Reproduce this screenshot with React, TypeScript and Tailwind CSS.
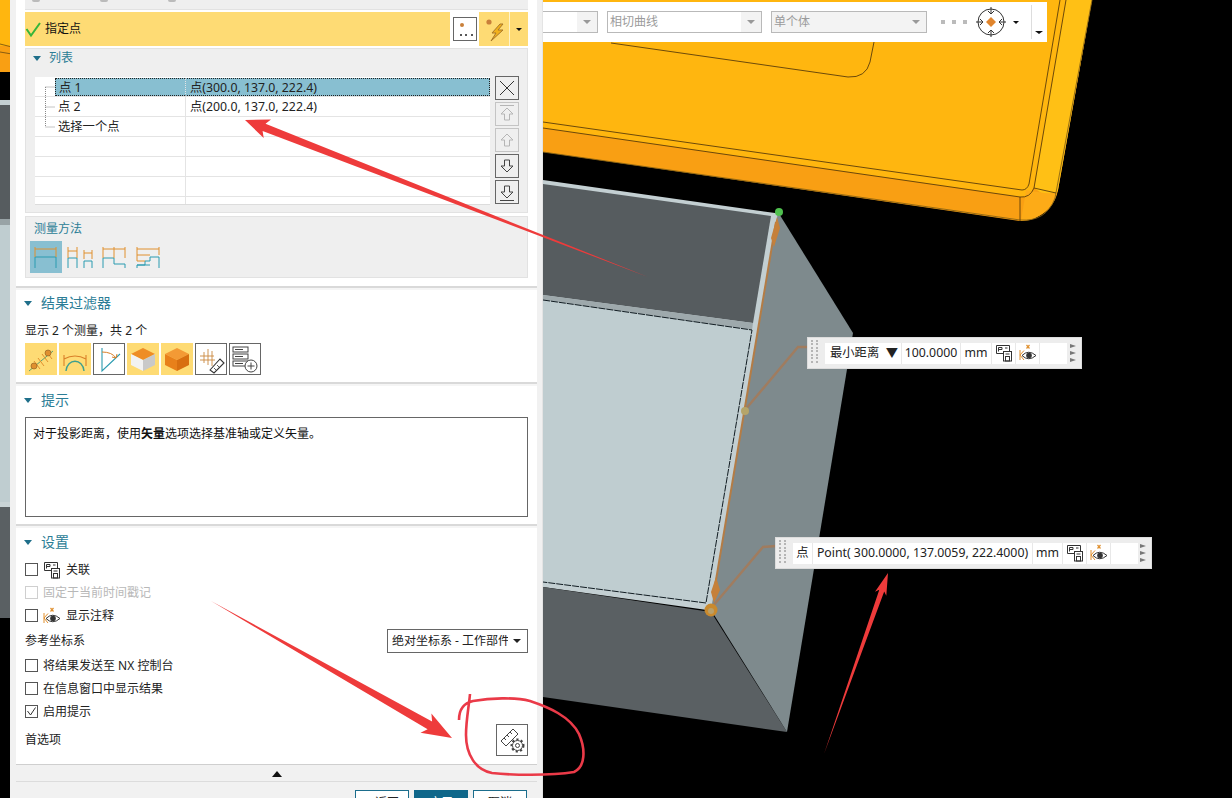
import React from "react";

const RED = "#ee3b3b";
const OR = "#e0902f";
const TE = "#2a9bb0";

function arrow(tx: number, ty: number, bx: number, by: number, hl: number, hw: number, sw: number) {
  const L = Math.hypot(bx - tx, by - ty);
  const dx = (bx - tx) / L, dy = (by - ty) / L;
  const px = -dy, py = dx;
  const p = (a: number, b: number) => `${(tx + dx * a + px * b).toFixed(1)},${(ty + dy * a + py * b).toFixed(1)}`;
  return [p(0, 0), p(hl, hw), p(hl * 0.85, sw), `${bx},${by}`, p(hl * 0.85, -sw), p(hl, -hw)].join(" ");
}

function Canvas() {
  return (
    <svg className="absolute inset-0" width="1232" height="798" viewBox="0 0 1232 798">
      <rect width="1232" height="798" fill="#000" />
      {/* left strip */}
      <rect x="0" y="0" width="12" height="46" fill="#ffb60f" />
      <rect x="0" y="46" width="12" height="26" fill="#f99f13" />
      <path d="M0 44 L12 47 M0 52 L12 54" stroke="#6b4a10" strokeWidth="0.8" />
      <rect x="0" y="100" width="12" height="6" fill="#c3cfd2" />
      <rect x="0" y="105" width="12" height="114" fill="#565c5f" />
      <rect x="0" y="219" width="12" height="6" fill="#98a3a6" />
      <rect x="0" y="225" width="12" height="277" fill="#bfcdd0" />
      <rect x="0" y="502" width="12" height="6" fill="#c9d4d6" />
      <rect x="0" y="507" width="12" height="111" fill="#5a6063" />
      {/* yellow plate */}
      <path d="M543 0 L1092 0 L1058 190 Q1054 212 1030 220 L1020 221 L543 152 Z" fill="#f99f13" />
      <path d="M543 0 L1066 0 L1034 186 Q1032 196 1022 197 L543 128 Z" fill="#ffb60f" />
      <path d="M1066 0 L1092 0 L1058 190 Q1054 205 1042 214 Q1052 200 1040 192 L1034 188 Z" fill="#ffc015" />
      <path d="M1026 190 Q1050 195 1057 192 Q1052 212 1030 220 L1021 221 Z" fill="#fdab17" />
      <g fill="none" stroke="#5b3d0a" strokeWidth="0.9">
        <path d="M543 122 L1022 190 Q1027 190 1029 184 L1060 0" />
        <path d="M543 128 L1020 197 Q1030 198 1034 188 L1066 0" />
        <path d="M543 152 L1020 220 Q1046 222 1055 198 L1092 0" stroke="#8a6414" />
        <path d="M1020 197 L1020 221 M1034 188 L1056 193" />
        <path d="M611 43 L848 77 Q866 78 870 62 L874 42" />
      </g>
      {/* box */}
      <polygon points="543,180 775,213 779,213 712,610 707,610 543,587" fill="#c3cfd2" />
      <polygon points="543,184 771,216 753,323 543,295" fill="#565c5f" />
      <polygon points="543,295 753,323 752,330 543,300" fill="#9ea9ac" />
      <polygon points="543,300 752,330 706,603 543,582" fill="#bfcdd0" />
      <polygon points="543,587 711,612 787,732 543,697" fill="#5a6063" />
      <polygon points="778,212 853,333 787,732 711,610" fill="#7e8a8d" />
      <path d="M543 300 L752 330 L706 603 L543 582" fill="none" stroke="#111c22" strokeWidth="1" strokeDasharray="7 1" />
      <path d="M776 222 L714 592" stroke="#b47c45" strokeWidth="2" />
      <path d="M745 410 L798 347 L808 347" fill="none" stroke="#a07c5f" strokeWidth="2.4" />
      <path d="M713 606 L763 547 L776 546" fill="none" stroke="#a07c5f" strokeWidth="2.4" />
      <path d="M777 217 L780 228 L774 247 L771 238 Z" fill="#c5803a" />
      <path d="M716 577 L720 590 L714 603 L711 592 Z" fill="#c5803a" />
      <circle cx="745" cy="411" r="4" fill="#b5a56a" />
      <circle cx="711" cy="610" r="6.5" fill="#c98a2e" />
      <circle cx="711" cy="611" r="3" fill="#b9a06a" />
      <circle cx="779" cy="212" r="4" fill="#4fc04f" />
    </svg>
  );
}

function Annotations() {
  return (
    <svg className="absolute inset-0 pointer-events-none" width="1232" height="798" viewBox="0 0 1232 798">
      <polygon points={arrow(245, 120, 648, 277, 24, 10, 4)} fill={RED} />
      <polygon points={arrow(452, 738, 211, 601, 30, 11, 4.5)} fill={RED} />
      <polygon points={arrow(888, 573, 824, 754, 22, 6, 2.6)} fill={RED} />
      <path
        d="M459 720 C459 709 464 703 473 701 C490 698 515 697 530 701 C548 707 570 716 579 734 C586 750 585 767 574 772 C550 776 510 775 492 773 C476 770 466 755 466 735 C466 720 469 706 470 694"
        fill="none"
        stroke="#ea3a48"
        strokeWidth="2.6"
      />
    </svg>
  );
}

function Caret() {
  return <span className="w-0 h-0 border-l-[4px] border-r-[4px] border-t-[5px] border-l-transparent border-r-transparent border-t-[#1f6f8a]" />;
}

function AssocIcon() {
  return (
    <svg width="18" height="18" viewBox="0 0 18 18" fill="none" stroke="#333" strokeWidth="1">
      <path d="M8 9.5 H1.5 V1.5 H14.5 V7" />
      <path d="M3.5 7.5 V3.5 H7 V5.5 H3.5 M10 4 H12.5" />
      <rect x="8.5" y="7.5" width="8" height="9.5" />
      <rect x="10.5" y="12.5" width="4" height="4.5" />
      <path d="M10.5 10 H14.5" />
    </svg>
  );
}

function EyeIcon() {
  return (
    <svg width="18" height="18" viewBox="0 0 18 18" fill="none">
      <path d="M7.5 1 L10.5 4.5 M10.5 1 L7.5 4.5" stroke={OR} strokeWidth="1.2" />
      <path d="M1 6 V16 M1 11 L5 6.5 M1 11 L5 16" stroke={OR} strokeWidth="1" />
      <path d="M3 11.5 Q9.5 5 17 11.5 Q9.5 18 3 11.5 Z" stroke="#333" strokeWidth="1" fill="#fff" />
      <circle cx="10" cy="11.5" r="2.8" fill="#333" />
    </svg>
  );
}

function Arrow({ d, dim, last, first }: { d: "up" | "down"; dim?: boolean; last?: boolean; first?: boolean }) {
  const c = dim ? "#b5b5b5" : "#444";
  return (
    <span className={`w-[24px] h-[24px] flex items-center justify-center border ${dim ? "border-[#c4c4c4]" : "border-[#666]"}`}>
      <svg width="18" height="20" viewBox="0 0 18 20" fill="none" stroke={c} strokeWidth="1">
        <g transform={d === "down" ? "rotate(180 9 10)" : undefined}>
          <path d="M9 4 L3 10 H6.5 V16 H11.5 V10 H15 Z" />
          {(first || last) && <path d="M2 1.5 H16" />}
        </g>
      </svg>
    </span>
  );
}

function MethodIcon({ n }: { n: number }) {
  const paths: Record<number, [string, string]> = {
    1: ["M5 6 V16 M26 6 V16 M5 8 H26", "M5 16 H26 M5 16 V27 M26 16 V27"],
    2: ["M4 6 V17 M13 6 V17 M4 10 H13 M20 9 V18 M28 9 V18 M20 12 H28", "M4 17 H13 M4 17 V27 M13 17 V27 M20 20 H28 M20 20 V27 M28 20 V27"],
    3: ["M5 6 V17 M16 6 V17 M27 6 V17 M5 8 H27", "M5 27 V17 H16 V23 H27 V27"],
    4: ["M5 6 V20 M5 8 H27 M27 6 V14 M5 20 H13 M5 14 H18", "M5 27 V24 H13 V20 H18 V16 H27 V27 M5 24 H18"],
  };
  const [o, t] = paths[n];
  return (
    <span className={`w-[32px] h-[32px] flex items-center justify-center ${n === 1 ? "bg-[#88bfd1]" : ""}`}>
      <svg width="32" height="32" viewBox="0 0 32 32" fill="none" strokeWidth="1">
        <path d={t} stroke={TE} />
        <path d={o} stroke={OR} />
      </svg>
    </span>
  );
}

function Cube({ white }: { white?: boolean }) {
  return (
    <svg width="32" height="32" viewBox="0 0 32 32">
      <polygon points="16,5 28,11 16,17 4,11" fill={white ? "#ee8d25" : "#f39a35"} />
      <polygon points="4,11 16,17 16,28 4,22" fill={white ? "#f2f2f2" : "#e8801a"} />
      <polygon points="16,17 28,11 28,22 16,28" fill={white ? "#c9c9c9" : "#d86f10"} />
    </svg>
  );
}

function FilterIcons() {
  const yellow = "w-[32px] h-[32px] bg-[#fedb74] flex items-center justify-center";
  const box = "w-[32px] h-[32px] bg-white border border-[#666] flex items-center justify-center";
  return (
    <div className="flex gap-[2px] h-[32px]">
      <span className={yellow}>
        <svg width="32" height="32" viewBox="0 0 32 32" fill="none">
          <path d="M4 28 L28 8" stroke="#5f9f6f" strokeWidth="1" />
          <path d="M9 18 L15 26 M13 15 L19 23 M17 11 L23 19 M21 8 L27 16" stroke={OR} strokeWidth="1" />
          <circle cx="9" cy="23" r="3" fill={OR} stroke="#8a5a20" strokeWidth="0.6" />
          <circle cx="23" cy="10" r="3" fill={OR} stroke="#8a5a20" strokeWidth="0.6" />
        </svg>
      </span>
      <span className={yellow}>
        <svg width="32" height="32" viewBox="0 0 32 32" fill="none">
          <path d="M7 28 C8 15 24 15 25 28" stroke="#3f9f8f" strokeWidth="1.4" />
          <path d="M5 12 V23 M27 12 V23 M5 16 Q16 10 27 16" stroke="#d97f28" strokeWidth="1.1" />
        </svg>
      </span>
      <span className={box}>
        <svg width="30" height="30" viewBox="0 0 30 30" fill="none">
          <path d="M8 4 V27 L26 10" stroke={TE} strokeWidth="1.1" />
          <path d="M8 8 Q18 8 22 14 M18 13 L22 14 L23 10" stroke="#d97f28" strokeWidth="1" />
        </svg>
      </span>
      <span className={yellow}><Cube white /></span>
      <span className={yellow}><Cube /></span>
      <span className={box}>
        <svg width="30" height="30" viewBox="0 0 30 30" fill="none">
          <path d="M4 12 H18 M4 16 H19 M8 8 V19 M12 5 V21 M16 7 V22" stroke="#c9883f" strokeWidth="0.9" />
          <path d="M14 26 L24 15 L28 19 L18 29 Z" stroke="#333" strokeWidth="1.1" fill="#fff" />
          <path d="M18 24 L21 27 M21 21 L24 24" stroke="#333" strokeWidth="0.8" />
        </svg>
      </span>
      <span className={box}>
        <svg width="30" height="30" viewBox="0 0 30 30" fill="none" stroke="#444" strokeWidth="1">
          <rect x="3" y="3" width="15" height="5" />
          <rect x="3" y="10" width="15" height="5" />
          <rect x="3" y="17" width="15" height="5" />
          <path d="M5 5.5 H13 M5 12.5 H13 M5 19.5 H13" />
          <circle cx="21" cy="22" r="6" fill="#fff" />
          <path d="M17.5 22 H24.5 M21 18.5 V25.5" />
        </svg>
      </span>
    </div>
  );
}

function Check({ on, dim }: { on?: boolean; dim?: boolean }) {
  return (
    <span className={`w-[13px] h-[13px] shrink-0 border flex items-center justify-center bg-white ${dim ? "border-[#cfcfcf]" : "border-[#555]"}`}>
      {on && (
        <svg width="11" height="11" viewBox="0 0 11 11" fill="none" stroke="#333" strokeWidth="1">
          <path d="M1.5 5 L4.5 9 L9.5 1.5" />
        </svg>
      )}
    </span>
  );
}

function Row({ on, dim, icon, label }: { on?: boolean; dim?: boolean; icon?: React.ReactNode; label: string }) {
  return (
    <div className="h-[23px] flex items-center gap-[5px]">
      <Check on={on} dim={dim} />
      {icon}
      <span className={dim ? "text-[#b8b8b8]" : "text-[#222]"}>{label}</span>
    </div>
  );
}

function Heading({ text, h }: { text: string; h: string }) {
  return (
    <div className={`${h} flex items-center pl-[8px] gap-[9px]`}>
      <Caret />
      <span className="text-[14px] text-[#2b7d96]">{text}</span>
    </div>
  );
}

function Sep() {
  return (
    <>
      <div className="h-[2px] bg-[#d9d9d9]" />
      <div className="h-[2px] bg-[#f5f5f5]" />
    </>
  );
}

function PointList() {
  const rows = [
    ["点 1", "点(300.0, 137.0, 222.4)"],
    ["点 2", "点(200.0, 137.0, 222.4)"],
    ["选择一个点", ""],
    ["", ""],
    ["", ""],
    ["", ""],
    ["", ""],
  ];
  return (
    <div className="relative w-[455px] h-[128px] bg-white overflow-hidden border-b border-[#dcdcdc] text-[12.3px]">
      {rows.map((r, i) => (
        <div key={i} className={`flex border-b border-[#e4e4e4] ${i === 6 ? "h-[8px]" : "h-[20px]"} ${i === 0 ? "pt-[1px]" : ""}`}>
          <div className="w-[150px] pl-[20px] relative">
            <div className={`h-full flex items-center pl-[3px] pt-[2px] ${i === 0 ? "bg-[#88bfd1] border-y border-l border-dotted border-[#222]" : ""}`}>{r[0]}</div>
          </div>
          <div className={`flex-1 border-l border-[#e4e4e4] pl-[4px] pt-[2px] flex items-center ${i === 0 ? "bg-[#88bfd1] border-y border-r border-y-[#222] border-r-[#222] border-dotted" : ""}`}>{r[1]}</div>
        </div>
      ))}
      <svg className="absolute left-[8px] top-[8px]" width="14" height="44" viewBox="0 0 14 44" fill="none" stroke="#888" strokeWidth="1" strokeDasharray="1 1">
        <path d="M2.5 2 V42 M2.5 2 H12 M2.5 22 H12 M2.5 42 H12" />
      </svg>
    </div>
  );
}

function Panel() {
  return (
    <div className="absolute left-[10px] top-0 w-[533px] h-[798px] bg-[#f1f1f1] pl-[6px] pr-[5px] overflow-hidden border-r border-[#e4e4e4] text-[12px] leading-none text-[#222]">
      <div className="h-[286px] bg-white px-[9px]">
        <div className="h-[10px] bg-[#efefef] relative border-b border-[#e2e2e2] flex">
          <span className="w-[8px] h-[2px] ml-[7px] bg-[#bbb] rounded-b-full" />
          <span className="w-[8px] h-[2px] ml-[60px] bg-[#bbb] rounded-b-full" />
          <span className="w-[8px] h-[2px] ml-[60px] bg-[#bbb] rounded-b-full" />
        </div>
        <div className="mt-[2px] h-[34px] flex">
          <div className="w-[425px] bg-[#fedb74] flex items-center gap-[3px]">
            <svg width="17" height="17" viewBox="0 0 17 17" fill="none" stroke="#35b53a" strokeWidth="2">
              <path d="M1.5 8 L6 14.5 L15 2" />
            </svg>
            <span className="text-[#111]">指定点</span>
          </div>
          <div className="w-[29px] flex items-center justify-center">
            <span className="w-[24px] h-[24px] bg-white border border-[#666] block">
              <svg width="22" height="22" viewBox="0 0 22 22">
                <circle cx="8" cy="7" r="2" fill="#c9803a" />
                <path d="M6 17 h2 M11 17 h2 M17 17 h2" stroke="#222" strokeWidth="1.6" />
              </svg>
            </span>
          </div>
          <div className="w-[31px] bg-[#fedb74] flex items-center justify-center border-r border-[#fff3c8]">
            <svg width="30" height="30" viewBox="0 0 30 30">
              <circle cx="10" cy="8" r="2.6" fill="#c9803a" />
              <path d="M21 10 L13 19 H17 L12 27 L24 16 H19 L24 10 Z" fill="#f2b21c" stroke="#a9772a" strokeWidth="1" />
            </svg>
          </div>
          <div className="flex-1 bg-[#fedb74] flex items-center justify-center">
            <span className="w-0 h-0 border-l-[3px] border-r-[3px] border-t-[3px] border-l-transparent border-r-transparent border-t-[#111]" />
          </div>
        </div>
        <div className="mt-[2px] h-[165px] bg-[#efefef] border border-[#e2e2e2] pl-[9px]">
          <div className="h-[18px] flex items-center -ml-[2px] gap-[8px]">
            <Caret />
            <span className="text-[#2b7d96]">列表</span>
          </div>
          <div className="mt-[10px] flex items-start">
            <PointList />
            <div className="ml-[5px] -mt-[1px] flex flex-col gap-[2px]">
              <span className="w-[24px] h-[24px] flex items-center justify-center border border-[#666]">
                <svg width="18" height="18" viewBox="0 0 18 18" stroke="#333" strokeWidth="1">
                  <path d="M2 2 L16 16 M16 2 L2 16" />
                </svg>
              </span>
              <Arrow d="up" dim first />
              <Arrow d="up" dim />
              <Arrow d="down" />
              <Arrow d="down" last />
            </div>
          </div>
        </div>
        <div className="mt-[3px] h-[62px] bg-[#efefef] border border-[#e2e2e2]">
          <div className="h-[24px] flex items-center pl-[8px] text-[#2b7d96]">测量方法</div>
          <div className="flex gap-[2px] pl-[4px]">
            <MethodIcon n={1} />
            <MethodIcon n={2} />
            <MethodIcon n={3} />
            <MethodIcon n={4} />
          </div>
        </div>
      </div>
      <Sep />

      <div className="h-[92px] bg-white px-[9px]">
        <div className="-ml-[9px]">
          <Heading text="结果过滤器" h="h-[26px]" />
        </div>
        <div className="h-[27px] flex items-center pt-[2px]">显示 2 个测量，共 2 个</div>
        <FilterIcons />
      </div>
      <Sep />

      <div className="h-[138px] bg-white px-[9px]">
        <div className="-ml-[9px]">
          <Heading text="提示" h="h-[28px]" />
        </div>
        <div className="mt-[3px] h-[100px] border border-[#666] px-[7px] pt-[10px] text-[#111]">
          对于投影距离，使用<b>矢量</b>选项选择基准轴或定义矢量。
        </div>
      </div>
      <Sep />

      <div className="h-[236px] bg-white px-[9px]">
        <div className="-ml-[9px]">
          <Heading text="设置" h="h-[30px] pb-[2px]" />
        </div>
        <Row icon={<AssocIcon />} label="关联" />
        <Row dim label="固定于当前时间戳记" />
        <Row icon={<EyeIcon />} label="显示注释" />
        <div className="mt-[2px] h-[24px] flex items-center justify-between">
          <span>参考坐标系</span>
          <div className="w-[141px] h-[24px] border border-[#666] flex items-center pl-[4px] pr-[6px] justify-between">
            <span className="w-[116px] overflow-hidden whitespace-nowrap">绝对坐标系 - 工作部件</span>
            <span className="w-0 h-0 border-l-[4px] border-r-[4px] border-t-[4px] border-l-transparent border-r-transparent border-t-[#222]" />
          </div>
        </div>
        <div className="mt-[1px]">
          <Row label="将结果发送至 NX 控制台" />
          <Row label="在信息窗口中显示结果" />
          <Row on label="启用提示" />
        </div>
        <div className="mt-[1px] h-[32px] flex items-center justify-between">
          <span>首选项</span>
          <span className="w-[32px] h-[32px] border border-[#666] flex items-center justify-center">
            <svg width="28" height="28" viewBox="0 0 28 28" fill="none" stroke="#444" strokeWidth="1">
              <path d="M3 15 L15 3 L20 8 L8 20 Z" />
              <path d="M6 12 L8 14 M9 9 L11 11 M12 6 L14 8" />
              <circle cx="19.5" cy="19.5" r="6" strokeWidth="2" strokeDasharray="2.2 2.2" />
              <circle cx="19.5" cy="19.5" r="5" fill="#fff" />
              <circle cx="19.5" cy="19.5" r="2" />
            </svg>
          </span>
        </div>
      </div>

      <div className="border-t border-[#cfcfcf] h-[17px] flex items-center justify-center">
        <span className="w-0 h-0 mt-[2px] border-l-[5px] border-r-[5px] border-b-[6px] border-l-transparent border-r-transparent border-b-[#111]" />
      </div>
      <div className="border-t border-[#dcdcdc] pt-[8px] pr-[10px] flex justify-end gap-[5px]">
        <span className="w-[54px] h-[26px] bg-white border border-[#1b6d8c] flex items-center justify-center">&lt; 返回</span>
        <span className="w-[54px] h-[26px] bg-[#0f678a] text-white flex items-center justify-center">应用</span>
        <span className="w-[54px] h-[26px] bg-white border border-[#1b6d8c] flex items-center justify-center">取消</span>
      </div>
    </div>
  );
}

function TSelect({ w, text, cls }: { w: string; text?: string; cls: string }) {
  return (
    <div className={`${w} h-[22px] border border-[#b9b9b9] flex items-center justify-between text-[#9b9b9b] ${cls}`}>
      <span className="pl-[2px]">{text}</span>
      <span className="w-[20px] h-full bg-[#f3f3f3] flex items-center justify-center">
        <span className="w-0 h-0 border-l-[4px] border-r-[4px] border-t-[4px] border-l-transparent border-r-transparent border-t-[#999]" />
      </span>
    </div>
  );
}

function Toolbar() {
  return (
    <div className="absolute left-[543px] top-[2px] w-[504px] h-[40px] bg-white flex items-center text-[12px] leading-none">
      <TSelect w="w-[55px]" cls="border-l-0 bg-white" />
      <TSelect w="w-[155px] ml-[9px]" text="相切曲线" cls="bg-white" />
      <TSelect w="w-[156px] ml-[9px]" text="单个体" cls="bg-[#f3f3f3]" />
      <span className="ml-[14px] flex gap-[7px]">
        <span className="w-[4px] h-[4px] bg-[#bbb]" />
        <span className="w-[4px] h-[4px] bg-[#bbb]" />
        <span className="w-[4px] h-[4px] bg-[#bbb]" />
      </span>
      <svg className="ml-[8px]" width="32" height="32" viewBox="0 0 32 32" fill="none" stroke="#333" strokeWidth="1">
        <circle cx="16" cy="16" r="13" />
        <path d="M16 1 V8 M13 5 L16 8 L19 5 M16 31 V24 M13 27 L16 24 L19 27 M1 16 H8 M5 13 L8 16 L5 19 M31 16 H24 M27 13 L24 16 L27 19" />
        <polygon points="16,11 21,16 16,21 11,16" fill="#e0852d" stroke="none" />
      </svg>
      <span className="ml-[6px] w-0 h-0 border-l-[3px] border-r-[3px] border-t-[3px] border-l-transparent border-r-transparent border-t-[#111]" />
      <span className="ml-[12px] w-px h-[34px] bg-[#ddd]" />
      <span className="ml-[3px] mt-[20px] w-0 h-0 border-l-[4px] border-r-[4px] border-t-[3px] border-l-transparent border-r-transparent border-t-[#111]" />
    </div>
  );
}

function Grip() {
  return (
    <span className="w-[8px] h-[27px] grid grid-cols-2 gap-x-[2px] gap-y-[1.5px] content-start">
      {Array.from({ length: 14 }).map((_, i) => (
        <span key={i} className="w-[2px] h-[2px] bg-[#b5b5b5]" />
      ))}
    </span>
  );
}

function Ticks() {
  return (
    <span className="ml-auto mr-[5px] flex flex-col gap-[3px]">
      {[0, 1, 2].map((i) => (
        <span key={i} className="w-0 h-0 border-t-[2.5px] border-b-[2.5px] border-l-[6px] border-t-transparent border-b-transparent border-l-[#777]" />
      ))}
    </span>
  );
}

function Cell({ w, children, cls = "justify-center" }: { w: string; children?: React.ReactNode; cls?: string }) {
  return <span className={`${w} h-full flex items-center whitespace-nowrap border-r border-[#e8e8e8] ${cls}`}>{children}</span>;
}

function Tag({ pos, inner, children }: { pos: string; inner: string; children: React.ReactNode }) {
  return (
    <div className={`absolute ${pos} h-[32px] bg-[#ededed] border border-[#dcdcdc] flex items-center pl-[3px] text-[12.3px] leading-none text-[#222]`}>
      <Grip />
      <div className={`${inner} h-[21px] ml-[6px] bg-white flex items-center`}>{children}</div>
      <Ticks />
    </div>
  );
}

export default function App() {
  return (
    <div className="relative w-[1232px] h-[798px] overflow-hidden bg-black font-['Noto_Sans','Noto_Sans_CJK_SC',sans-serif]">
      <Canvas />
      <Toolbar />
      <Panel />
      <Tag pos="left-[807px] top-[337px] w-[275px]" inner="w-[242px]">
        <Cell w="w-[77px]" cls="justify-between pl-[5px] pr-[3px]">
          <span>最小距离</span>
          <span>▼</span>
        </Cell>
        <Cell w="w-[59px]">100.0000</Cell>
        <Cell w="w-[31px]">mm</Cell>
        <Cell w="w-[24px]"><AssocIcon /></Cell>
        <Cell w="w-[24px]"><EyeIcon /></Cell>
      </Tag>
      <Tag pos="left-[775px] top-[537px] w-[377px]" inner="w-[345px]">
        <Cell w="w-[20px]">点</Cell>
        <Cell w="w-[220px]">Point( 300.0000, 137.0059, 222.4000)</Cell>
        <Cell w="w-[30px]">mm</Cell>
        <Cell w="w-[24px]"><AssocIcon /></Cell>
        <Cell w="w-[24px]"><EyeIcon /></Cell>
      </Tag>
      <Annotations />
    </div>
  );
}
